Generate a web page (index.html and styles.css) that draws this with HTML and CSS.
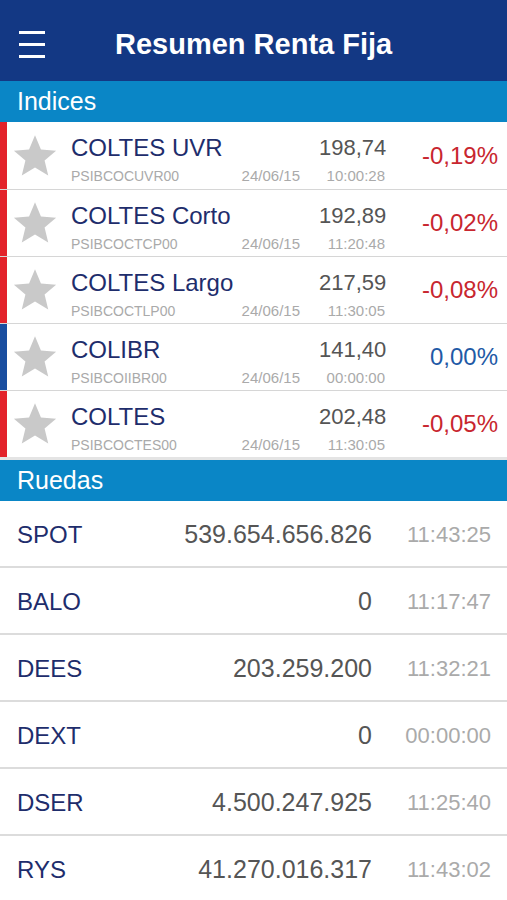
FILE: index.html
```html
<!DOCTYPE html>
<html lang="es">
<head>
    <meta charset="UTF-8">
    <meta name="viewport" content="width=device-width, initial-scale=1.0">
    <title>Resumen Renta Fija</title>
    <link rel="stylesheet" href="styles.css">
</head>
<body>
    <header class="topbar">
        <div class="menu">
            <span></span><span></span><span></span>
        </div>
        <h1 class="title">Resumen Renta Fija</h1>
    </header>

    <div class="section">Indices</div>
    <div class="indices">
        <div class="index down">
            <div class="flag"></div>
            <svg class="star" viewBox="0 0 24 24"><polygon points="12,1.2 15.1,8.6 23,9.2 17,14.4 18.9,22.2 12,18 5.1,22.2 7,14.4 1,9.2 8.9,8.6"/></svg>
            <div class="info">
                <div class="name">COLTES UVR</div>
                <div class="value">198,74</div>
                <div class="code">PSIBCOCUVR00</div>
                <div class="date">24/06/15</div>
                <div class="time">10:00:28</div>
            </div>
            <div class="pct">-0,19%</div>
        </div>
        <div class="index down">
            <div class="flag"></div>
            <svg class="star" viewBox="0 0 24 24"><polygon points="12,1.2 15.1,8.6 23,9.2 17,14.4 18.9,22.2 12,18 5.1,22.2 7,14.4 1,9.2 8.9,8.6"/></svg>
            <div class="info">
                <div class="name">COLTES Corto</div>
                <div class="value">192,89</div>
                <div class="code">PSIBCOCTCP00</div>
                <div class="date">24/06/15</div>
                <div class="time">11:20:48</div>
            </div>
            <div class="pct">-0,02%</div>
        </div>
        <div class="index down">
            <div class="flag"></div>
            <svg class="star" viewBox="0 0 24 24"><polygon points="12,1.2 15.1,8.6 23,9.2 17,14.4 18.9,22.2 12,18 5.1,22.2 7,14.4 1,9.2 8.9,8.6"/></svg>
            <div class="info">
                <div class="name">COLTES Largo</div>
                <div class="value">217,59</div>
                <div class="code">PSIBCOCTLP00</div>
                <div class="date">24/06/15</div>
                <div class="time">11:30:05</div>
            </div>
            <div class="pct">-0,08%</div>
        </div>
        <div class="index flat">
            <div class="flag"></div>
            <svg class="star" viewBox="0 0 24 24"><polygon points="12,1.2 15.1,8.6 23,9.2 17,14.4 18.9,22.2 12,18 5.1,22.2 7,14.4 1,9.2 8.9,8.6"/></svg>
            <div class="info">
                <div class="name">COLIBR</div>
                <div class="value">141,40</div>
                <div class="code">PSIBCOIIBR00</div>
                <div class="date">24/06/15</div>
                <div class="time">00:00:00</div>
            </div>
            <div class="pct">0,00%</div>
        </div>
        <div class="index down">
            <div class="flag"></div>
            <svg class="star" viewBox="0 0 24 24"><polygon points="12,1.2 15.1,8.6 23,9.2 17,14.4 18.9,22.2 12,18 5.1,22.2 7,14.4 1,9.2 8.9,8.6"/></svg>
            <div class="info">
                <div class="name">COLTES</div>
                <div class="value">202,48</div>
                <div class="code">PSIBCOCTES00</div>
                <div class="date">24/06/15</div>
                <div class="time">11:30:05</div>
            </div>
            <div class="pct">-0,05%</div>
        </div>
    </div>

    <div class="section">Ruedas</div>
    <div class="ruedas">
        <div class="rueda"><span class="rname">SPOT</span><span class="amount">539.654.656.826</span><span class="rtime">11:43:25</span></div>
        <div class="rueda"><span class="rname">BALO</span><span class="amount">0</span><span class="rtime">11:17:47</span></div>
        <div class="rueda"><span class="rname">DEES</span><span class="amount">203.259.200</span><span class="rtime">11:32:21</span></div>
        <div class="rueda"><span class="rname">DEXT</span><span class="amount">0</span><span class="rtime">00:00:00</span></div>
        <div class="rueda"><span class="rname">DSER</span><span class="amount">4.500.247.925</span><span class="rtime">11:25:40</span></div>
        <div class="rueda"><span class="rname">RYS</span><span class="amount">41.270.016.317</span><span class="rtime">11:43:02</span></div>
    </div>
</body>
</html>
```

FILE: styles.css
```css
body {
    margin: 0;
    font-family: "Liberation Sans", Arial, sans-serif;
    background-color: #fff;
    overflow: hidden;
}
.topbar {
    height: 73px;
    padding-top: 8px;
    background-color: #133884;
    display: flex;
    align-items: center;
}
.menu {
    width: 26px;
    margin-left: 19px;
    display: flex;
    flex-direction: column;
    gap: 9px;
}
.menu span {
    display: block;
    height: 3px;
    background-color: #fff;
}
.title {
    margin: 0 0 0 70px;
    color: #fff;
    font-size: 29px;
    font-weight: bold;
}
.section {
    height: 41px;
    line-height: 41px;
    background-color: #0a86c6;
    color: #fff;
    font-size: 25px;
    padding-left: 17px;
}
.indices {
    border-bottom: 3px solid #e4e4e4;
}
.index {
    height: 66px;
    display: flex;
    align-items: stretch;
    border-top: 1px solid #d6d6d6;
}
.index:first-child {
    border-top: none;
    height: 67px;
}
.flag {
    width: 7px;
}
.down .flag {
    background-color: #e3232b;
}
.flat .flag {
    background-color: #1a4ea0;
}
.star {
    width: 46px;
    height: 46px;
    margin: 0 13px 0 5px;
    align-self: center;
    fill: #c9c9c9;
}
.info {
    width: 314px;
    display: grid;
    grid-template-columns: 1fr auto 66px;
    grid-template-rows: 28px 16px;
    column-gap: 19px;
    row-gap: 6px;
    padding-top: 12px;
}
.name {
    grid-column: 1 / 3;
    font-size: 24px;
    line-height: 28px;
    color: #1e2d6c;
    white-space: nowrap;
}
.value {
    font-size: 22px;
    line-height: 28px;
    color: #555;
    text-align: right;
}
.code, .date, .time {
    font-size: 15px;
    line-height: 16px;
    color: #aaa;
}
.code {
    font-size: 14px;
}
.time {
    text-align: right;
}
.pct {
    flex: 1;
    align-self: center;
    text-align: right;
    padding-right: 9px;
    font-size: 24px;
}
.down .pct {
    color: #c8262f;
}
.flat .pct {
    color: #1f5aa6;
}
.rueda {
    height: 63px;
    display: flex;
    align-items: center;
    padding: 2px 16px 0 17px;
    border-bottom: 2px solid #dcdcdc;
}
.rname {
    width: 120px;
    font-size: 24px;
    color: #1e2d6c;
}
.amount {
    flex: 1;
    text-align: right;
    font-size: 25px;
    color: #555;
}
.rtime {
    width: 119px;
    text-align: right;
    font-size: 22px;
    color: #aaa;
}
```
